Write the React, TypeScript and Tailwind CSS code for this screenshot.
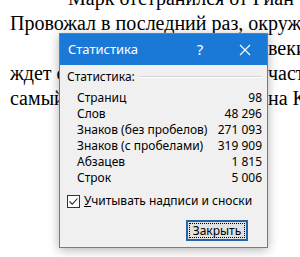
import React from "react";

const stats: [string, string][] = [
  ["Страниц", "98"],
  ["Слов", "48 296"],
  ["Знаков (без пробелов)", "271 093"],
  ["Знаков (с пробелами)", "319 909"],
  ["Абзацев", "1 815"],
  ["Строк", "5 006"],
];

function DocLine({ left, right }: { left: string; right: string }) {
  return (
    <div className="grid grid-cols-[258px_auto] whitespace-nowrap h-[25px]">
      <span className="overflow-hidden">{left}</span>
      <span>{right}</span>
    </div>
  );
}

function StatsDialog() {
  return (
    <div
      className="absolute left-[59px] top-[33px] w-[209px] h-[215px] flex flex-col border border-[#3c87d6] bg-[#f0f0f0] shadow-[0_2px_10px_rgba(0,0,0,0.3)]"
      style={{ fontFamily: '"Noto Sans", "Open Sans", sans-serif' }}
    >
      <div className="h-[31px] bg-[#1a78d6] flex items-center text-white text-[13px] pl-[8px] shrink-0">
        <span className="flex-1">Статистика</span>
        <span className="w-[46px] text-center text-[15px]">?</span>
        <span className="w-[44px] flex justify-center">
          <svg width="12" height="12" viewBox="0 0 12 12">
            <path d="M1 1L11 11M11 1L1 11" stroke="white" strokeWidth="1.2" />
          </svg>
        </span>
      </div>

      <div className="flex-1 flex flex-col px-[7px] pr-[5px] pt-[3px] text-[12px] text-black">
        <div className="flex items-center gap-[4px] h-[18px]">
          <span>Статистика:</span>
          <div className="flex-1 h-[2px] border-t border-[#d5d5d5] border-b-white border-b" />
        </div>
        <div className="flex flex-col pl-[10px] pt-[4px]">
          {stats.map(([label, value]) => (
            <div key={label} className="flex justify-between h-[16px] items-center">
              <span>{label}</span>
              <span>{value}</span>
            </div>
          ))}
        </div>
        <label className="flex items-center gap-[4px] mt-[6px] h-[18px]">
          <span className="w-[13px] h-[13px] bg-white border border-[#333] flex items-center justify-center">
            <svg width="11" height="11" viewBox="0 0 11 11">
              <path d="M1.5 5.5L4.2 8.2L9.5 2.5" stroke="#1f2a36" strokeWidth="1.1" fill="none" />
            </svg>
          </span>
          <span>
            <span className="underline">У</span>читывать надписи и сноски
          </span>
        </label>
        <div className="flex justify-end mt-auto mb-[6px] pr-[14px]">
          <button className="w-[62px] h-[21px] bg-[#e1e1e1] border-2 border-[#2466a4] p-[1px]">
            <span className="flex h-full items-center justify-center border border-dotted border-black text-[12px] leading-none">
              Закрыть
            </span>
          </button>
        </div>
      </div>
    </div>
  );
}

export default function App() {
  return (
    <div className="relative w-[300px] h-[257px] bg-white overflow-hidden">
      <div
        className="pl-[10px] -mt-[14px] text-[20px] leading-[25px] text-black"
        style={{ fontFamily: '"Liberation Serif", serif' }}
      >
        <div className="whitespace-nowrap h-[25px] pl-[58px]">Марк отстранился от Гиан</div>
        <div className="whitespace-nowrap h-[25px]">Провожал в последний раз, окружа</div>
        <DocLine left="" right="веки" />
        <DocLine left="ждет своего часа, того" right="частью" />
        <DocLine left="самый первый день" right="на Кар" />
      </div>
      <StatsDialog />
    </div>
  );
}
